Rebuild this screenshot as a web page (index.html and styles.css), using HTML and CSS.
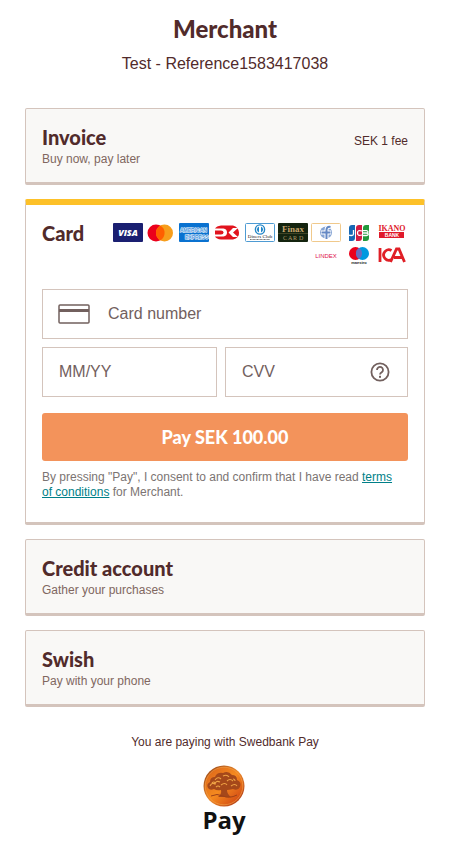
FILE: index.html
```html
<!DOCTYPE html>
<html lang="en">
<head>
<meta charset="utf-8">
<meta name="viewport" content="width=device-width, initial-scale=1">
<title>Payment menu</title>
<link rel="stylesheet" href="styles.css">
</head>
<body>
<main class="page">
  <header class="head">
    <h1 class="merchant">Merchant</h1>
    <p class="reference">Test - Reference1583417038</p>
  </header>

  <div class="methods">
    <button type="button" class="panel option">
      <span class="option-text"><span class="title">Invoice</span><span class="sub">Buy now, pay later</span></span>
      <span class="fee">SEK 1 fee</span>
    </button>

    <section class="panel open">
      <div class="open-head">
        <h2 class="title">Card</h2>
        <div class="brands">
          <svg class="brand" viewBox="0 0 30 20" role="img" aria-label="Visa">
            <rect width="30" height="19" rx="1" fill="#1a1f71"/>
            <text class="visa" x="15" y="13" text-anchor="middle" fill="#fff">VISA</text>
          </svg>
          <svg class="brand" viewBox="0 0 30 20" role="img" aria-label="Mastercard">
            <circle cx="10" cy="10" r="8.500" fill="#eb001b"/><circle cx="18.500" cy="10" r="8.500" fill="#f79e1b"/>
            <path d="M14.250 2.600a8.500 8.500 0 0 1 0 14.800a8.500 8.500 0 0 1 0-14.800z" fill="#ff5f00"/>
          </svg>
          <svg class="brand" viewBox="0 0 30 20" role="img" aria-label="American Express">
            <rect width="30" height="19" rx="1" fill="#0a72d0"/>
            <text class="t5 bold outlined" x="1" y="9">AMERICAN</text>
            <text class="t5 bold outlined" x="6" y="16">EXPRESS</text>
          </svg>
          <svg class="brand" viewBox="0 0 30 20" role="img" aria-label="Dankort">
            <path d="M9 2.500H21Q26.500 4 27 9.500T21 16.500H9Q4.500 16 3 13.500H11.500Q15 13 15 9.500T11.500 5.500H3Q4.500 3 9 2.500z" fill="#e1141e"/>
            <path d="M3 7.500H9Q11.500 7.500 11.500 9.500T9 11.500H3z" fill="#e1141e"/>
            <path d="M16.500 9.500L21 5H26L21 9.500L26 14H21z" fill="#fff"/>
          </svg>
          <svg class="brand" viewBox="0 0 30 20" role="img" aria-label="Diners Club">
            <rect x=".5" y=".5" width="29" height="18" rx="1" fill="#fff" stroke="#4e9bd3"/>
            <circle cx="15" cy="6.500" r="4.600" fill="#fff" stroke="#2387c8" stroke-width="1.400"/>
            <path d="M14 3.500a3.200 3.200 0 0 0 0 6zM16 3.500a3.200 3.200 0 0 1 0 6z" fill="#2387c8"/>
            <text class="t5 serif" x="15" y="15" text-anchor="middle" fill="#222">Diners Club</text>
            <path d="M5 16.500H25" stroke="#555" stroke-width=".8" stroke-dasharray="1 .4"/>
          </svg>
          <svg class="brand" viewBox="0 0 30 20" role="img" aria-label="Finax Card">
            <rect width="30" height="19" rx="1" fill="#14240f"/>
            <text class="t9 serif bold" x="15" y="9" text-anchor="middle" fill="#c5a36c">Finax</text>
            <path d="M0 10.500H30" stroke="#4b4c2c" stroke-width=".8"/>
            <text class="t6 serif" x="5" y="17" fill="#b29a69">C</text><text class="t6 serif" x="10" y="17" fill="#b29a69">A</text><text class="t6 serif" x="15" y="17" fill="#b29a69">R</text><text class="t6 serif" x="21" y="17" fill="#b29a69">D</text>
          </svg>
          <svg class="brand" viewBox="0 0 30 20" role="img" aria-label="Forbrugsforeningen">
            <rect x=".5" y=".5" width="29" height="18" rx="1" fill="#fff" stroke="#f0c98b"/>
            <circle cx="15" cy="9.500" r="6" fill="#86a5d4"/>
            <path d="M20 4Q15.500 3 15.500 7V17M10 9.500H20" fill="none" stroke="#fff" stroke-width="4"/>
            <path d="M19.500 4Q15.500 3.200 15.500 7V16M10.500 9.500H19.500" fill="none" stroke="#6488c4" stroke-width="2"/>
          </svg>
          <svg class="brand" viewBox="0 0 30 20" role="img" aria-label="JCB">
            <path d="M8 2H11V15Q11 18 8 18H5V5Q5 2 8 2z" fill="#1768b4"/>
            <path d="M15 2H18V15Q18 18 15 18H12V5Q12 2 15 2z" fill="#d31c42"/>
            <path d="M22 2H25V15Q25 18 22 18H19V5Q19 2 22 2z" fill="#22993c"/>
            <path d="M9.500 7V11Q9.500 12.500 7.500 12.500T5 12M18 8Q13.500 6.500 13.500 10T18 12M19 7.700H22.500Q24 8 24 9T22.500 10H19M22.500 10Q24.300 10.300 24.300 11.300T22.500 12.500H19" fill="none" stroke="#fff" stroke-width="1.300"/>
          </svg>
          <svg class="brand" viewBox="0 0 30 20" role="img" aria-label="Ikano Bank">
            <text class="t8 serif bold" x="15" y="8" text-anchor="middle" fill="#e0192b">IKANO</text>
            <rect x="2" y="9" width="25" height="6" fill="#e0192b"/>
            <text class="t5 bold" x="15" y="14" text-anchor="middle" fill="#fff">BANK</text>
          </svg>
          <svg class="brand" viewBox="0 0 30 20" role="img" aria-label="Lindex">
            <text class="t6" x="15" y="12" text-anchor="middle" fill="#e0114c">LINDEX</text>
          </svg>
          <svg class="brand" viewBox="0 0 30 20" role="img" aria-label="Maestro">
            <circle cx="11.500" cy="7.500" r="6.500" fill="#eb001b"/><circle cx="18.500" cy="7.500" r="6.500" fill="#0099df"/>
            <path d="M15 2a6.500 6.500 0 0 1 0 11a6.500 6.500 0 0 1 0-11z" fill="#6c6bbd"/>
            <text class="t4 bold" x="15" y="18" text-anchor="middle" fill="#222">maestro</text>
          </svg>
          <svg class="brand" viewBox="0 0 30 20" role="img" aria-label="ICA">
            <path d="M3 2V16M14.500 4.500A5.200 5.200 0 1 0 14.500 13.500M13.500 16L19.500 3H22L27.500 16M17 11.500H25" fill="none" stroke="#e01f26" stroke-width="2.800"/>
          </svg>
        </div>
      </div>

      <form class="form">
        <label class="field wide">
          <svg class="card-icon" viewBox="0 0 32 20" aria-hidden="true">
            <rect x="1" y="1" width="30" height="18" rx="1" fill="none" stroke="#72605e" stroke-width="1.500"/>
            <rect x="1" y="5" width="30" height="3" fill="#72605e"/>
          </svg>
          <input type="text" inputmode="numeric" placeholder="Card number" aria-label="Card number">
        </label>
        <label class="field"><input type="text" placeholder="MM/YY" aria-label="MM/YY"></label>
        <div class="field">
          <input type="text" placeholder="CVV" aria-label="CVV">
          <button type="button" class="help" aria-label="About CVV">
            <svg viewBox="0 0 20 20" aria-hidden="true">
              <circle cx="10" cy="10" r="8.600" fill="none" stroke="#72605e" stroke-width="1.800"/>
              <path d="M7 8a3 3 0 1 1 5 2.100Q10 11.300 10 12.600" fill="none" stroke="#72605e" stroke-width="1.800"/>
              <rect x="9" y="13.800" width="2" height="2" fill="#72605e"/>
            </svg>
          </button>
        </div>
        <button type="submit" class="pay">Pay SEK 100.00</button>
        <p class="terms">By pressing "Pay", I consent to and confirm that I have read <a href="#terms">terms of conditions</a> for Merchant.</p>
      </form>
    </section>

    <button type="button" class="panel option">
      <span class="option-text"><span class="title">Credit account</span><span class="sub">Gather your purchases</span></span>
    </button>
    <button type="button" class="panel option">
      <span class="option-text"><span class="title">Swish</span><span class="sub">Pay with your phone</span></span>
    </button>
  </div>

  <footer class="foot">
    <p class="paying">You are paying with Swedbank Pay</p>
    <svg class="logo" viewBox="0 0 48 76" role="img" aria-label="Swedbank Pay">
      <defs>
        <linearGradient id="coin" x1="0" y1="0" x2="1" y2="1">
          <stop offset="0" stop-color="#d9621a"/><stop offset=".5" stop-color="#f58a1f"/><stop offset="1" stop-color="#c93a12"/>
        </linearGradient>
        <linearGradient id="rim" x1="0" y1="0" x2="1" y2="1">
          <stop offset="0" stop-color="#8c3b14"/><stop offset=".5" stop-color="#ee8b2c"/><stop offset="1" stop-color="#a52a10"/>
        </linearGradient>
      </defs>
      <g transform="translate(2 0)">
        <circle cx="21" cy="21" r="20.500" fill="url(#rim)"/>
        <circle cx="21" cy="21" r="18.800" fill="url(#coin)" stroke="#f9a54a" stroke-width=".6"/>
        <path d="M5 23Q3 19 7 17Q7 12 12 12Q14 7 20 8Q25 5 29 10Q34 10 34 15Q39 17 37 22Q35 26 30 24Q26 25 24 25Q24 29 28 32H15Q19 29 18 25Q14 26 11 24Q7 26 5 23z" fill="#a5481a"/>
        <path d="M7 21q2-4 5-2q1-4 5-2M12 15q3-4 6-1M20 11q4-2 6 1M24 16q3-3 6 0M28 21q4-3 6 0M18 20q4-3 6 0M13 22q2-2 4 0M9 18q2-2 3 0M30 14q2 0 2 2" fill="none" stroke="#efa345" stroke-width="1.100"/>
        <path d="M8 31Q14 28 20 31T34 30" fill="none" stroke="#9d4017" stroke-width="1"/>
      </g>
      <text class="logo-text" x="23" y="64" text-anchor="middle" fill="#111">Pay</text>
    </svg>
  </footer>
</main>
</body>
</html>
```
FILE: styles.css
```css
* { box-sizing: border-box; }

body {
  margin: 0;
  background: #fff;
  color: #512b2b;
  font: 12px/15px "Liberation Sans", Arial, sans-serif;
}

h1, h2, p { margin: 0; }
button, input { font: inherit; color: inherit; }

.page { padding: 14px 25px 8px; }

.head { text-align: center; }

.merchant {
  font: 900 24px/30px Lato, sans-serif;
}

.reference {
  margin-top: 8px;
  font-size: 16px;
  line-height: 24px;
}

.methods {
  display: flex;
  flex-direction: column;
  gap: 14px;
  margin-top: 32px;
}

.panel {
  width: 100%;
  padding: 16px;
  border: 1px solid #d4c4bc;
  border-bottom-width: 3px;
  border-radius: 2px;
}

.option {
  display: flex;
  align-items: center;
  justify-content: space-between;
  padding-bottom: 14px;
  background: #f9f8f6;
  text-align: left;
  cursor: pointer;
}

.option-text {
  display: flex;
  flex-direction: column;
  gap: 2px;
}

.title {
  font: 900 20px/24px Lato, sans-serif;
}

.sub { color: #80675f; line-height: 17px; }

.fee { padding-bottom: 11px; }

.open {
  border-top: 6px solid #fdc129;
  padding-bottom: 22px;
}

.open-head {
  display: flex;
  justify-content: space-between;
  gap: 28px;
}

.brands {
  display: flex;
  flex-wrap: wrap;
  justify-content: flex-end;
  gap: 3px;
  padding: 2px 1px 0 0;
}

.brand {
  width: 30px;
  height: 20px;
}

.brand text { font-family: "Liberation Sans", Arial, sans-serif; }
.brand .serif { font-family: "Liberation Serif", "Times New Roman", serif; }
.brand .visa { font: italic 900 9px "Open Sans", sans-serif; }
.t4 { font-size: 4px; }
.t5 { font-size: 5px; }
.t6 { font-size: 6px; }
.t8 { font-size: 8px; }
.t9 { font-size: 9px; }
.bold { font-weight: 700; }
.outlined { fill: #3d92dd; stroke: #fff; stroke-width: 1px; paint-order: stroke; }

.form {
  display: grid;
  grid-template-columns: 175fr 183fr;
  gap: 8px;
  margin-top: 23px;
}

.field {
  display: flex;
  align-items: center;
  min-width: 0;
  height: 50px;
  padding: 0 16px;
  border: 1px solid #d4c4bc;
}

.wide, .pay, .terms { grid-column: 1 / -1; }
.wide { padding: 0 15px; }

.field input {
  flex: 1;
  min-width: 0;
  height: 20px;
  padding: 0;
  border: 0;
  outline: 0;
  background: none;
  font-size: 16px;
}

.field input::placeholder { color: #72605e; opacity: 1; }

.card-icon {
  width: 32px;
  height: 20px;
  margin-right: 18px;
}

.help {
  display: flex;
  width: 20px;
  height: 20px;
  margin-right: 1px;
  padding: 0;
  border: 0;
  background: none;
}

.pay {
  height: 48px;
  margin-top: 8px;
  border: 0;
  border-radius: 3px;
  background: #f3935b;
  color: #fff;
  font: 900 18px/20px Lato, sans-serif;
}

.terms { padding: 1px 8px 0 0; color: #7b7472; }
.terms a { color: #007f88; }

.foot {
  display: flex;
  flex-direction: column;
  align-items: center;
  margin-top: 28px;
}

.logo {
  width: 48px;
  height: 76px;
  margin-top: 15px;
}

.logo-text {
  font: 700 24px "Open Sans", sans-serif;
}
```
